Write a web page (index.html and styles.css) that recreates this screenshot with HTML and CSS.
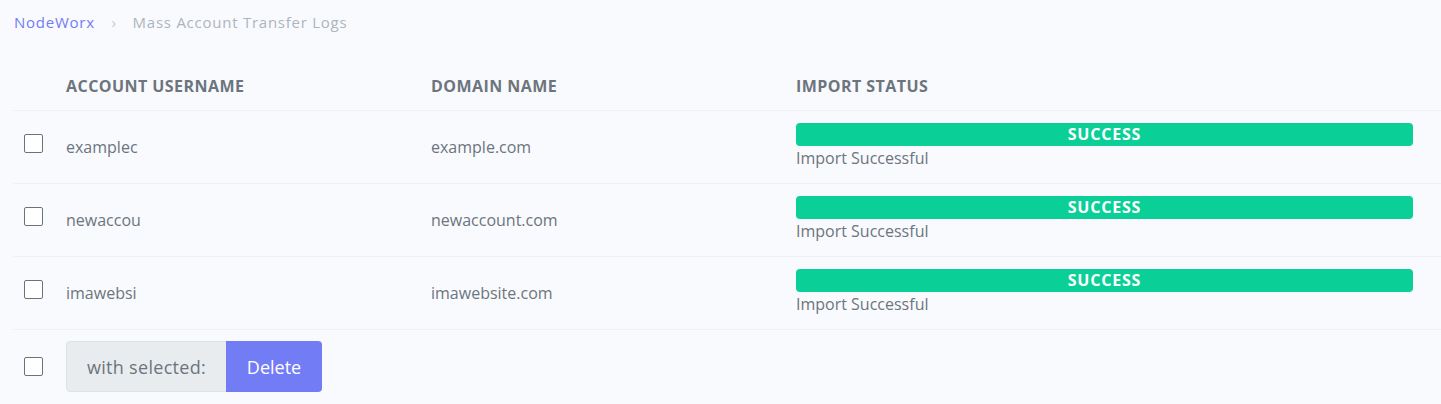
FILE: index.html
```html
<!DOCTYPE html>
<html lang="en">
<head>
<meta charset="utf-8">
<title>Mass Account Transfer Logs</title>
<link rel="stylesheet" href="styles.css">
</head>
<body>
<nav class="crumbs">
  <a class="crumb-link" href="#">NodeWorx</a>
  <span class="crumb-sep">›</span>
  <span class="crumb-current">Mass Account Transfer Logs</span>
</nav>
<table class="logs">
  <colgroup>
    <col class="c-check"><col class="c-user"><col class="c-domain"><col class="c-status">
  </colgroup>
  <thead>
    <tr>
      <th></th>
      <th>Account Username</th>
      <th>Domain Name</th>
      <th class="status-cell">Import Status</th>
    </tr>
  </thead>
  <tbody>
    <tr>
      <td class="check-cell"><span class="box"></span></td>
      <td>examplec</td>
      <td>example.com</td>
      <td class="status-cell"><div class="badge">SUCCESS</div><div class="msg">Import Successful</div></td>
    </tr>
    <tr>
      <td class="check-cell"><span class="box"></span></td>
      <td>newaccou</td>
      <td>newaccount.com</td>
      <td class="status-cell"><div class="badge">SUCCESS</div><div class="msg">Import Successful</div></td>
    </tr>
    <tr>
      <td class="check-cell"><span class="box"></span></td>
      <td>imawebsi</td>
      <td>imawebsite.com</td>
      <td class="status-cell"><div class="badge">SUCCESS</div><div class="msg">Import Successful</div></td>
    </tr>
  </tbody>
  <tfoot>
    <tr>
      <td class="check-cell"><span class="box"></span></td>
      <td colspan="3">
        <div class="group"><span class="group-label">with selected:</span><button class="btn-delete">Delete</button></div>
      </td>
    </tr>
  </tfoot>
</table>
</body>
</html>
```
FILE: styles.css
```css
html, body {
  margin: 0;
  padding: 0;
  background: #f9fafe;
  font-family: "Open Sans", "Lato", sans-serif;
  color: #6c757d;
}
.crumbs {
  padding: 12px 0 0 14px;
  height: 36px;
  box-sizing: border-box;
  font-size: 15px;
  letter-spacing: 0.75px;
  line-height: 20px;
}
.crumb-link { color: #727cf5; text-decoration: none; }
.crumb-sep { color: #c5c9d0; margin: 0 12px 0 12px; letter-spacing: 0; }
.crumb-current { color: #adb5bd; }
.logs {
  margin-left: 13px;
  width: 1428px;
  table-layout: fixed;
  border-collapse: collapse;
  margin-top: 24px;
}
.c-check { width: 53px; }
.c-user { width: 365px; }
.c-domain { width: 365px; }
.logs th {
  text-align: left;
  font-size: 16px;
  font-weight: 700;
  letter-spacing: 0.45px;
  text-transform: uppercase;
  color: #6c757d;
  padding: 17px 0 15px;
  line-height: 18px;
  border-bottom: 1px solid #eef0f5;
}
.logs td {
  font-size: 16px;
  line-height: 24px;
  padding: 12px 0 13px;
  border-bottom: 1px solid #eef0f5;
  vertical-align: middle;
}
.logs td.check-cell { padding-left: 11px; }
.logs .status-cell { padding-right: 28px; }
.box {
  display: block;
  width: 17px;
  height: 17px;
  border: 1.5px solid #6e7378;
  border-radius: 2px;
  background: #fff;
  margin-top: -6px;
}
.badge {
  background: #0acf97;
  color: #fff;
  border-radius: 4px;
  text-align: center;
  font-size: 16px;
  font-weight: 700;
  letter-spacing: 0.8px;
  height: 23px;
  line-height: 23px;
}
.msg { line-height: 24px; }
.logs tfoot td { border-bottom: none; padding: 11px 0; }
.logs tfoot .check-cell .box { margin-top: 0; }
.group {
  display: inline-flex;
  height: 51px;
  border-radius: 4px;
  overflow: hidden;
  font-size: 18px;
}
.group-label {
  background: #e9ecef;
  color: #6c757d;
  width: 160px;
  display: flex;
  align-items: center;
  justify-content: center;
  border: 1px solid #dee2e6;
  border-right: none;
  border-radius: 4px 0 0 4px;
  box-sizing: border-box;
  letter-spacing: 0.3px;
}
.btn-delete {
  width: 96px;
  background: #727cf5;
  color: #fff;
  border: none;
  font: inherit;
  font-size: 18px;
  padding: 0;
}
```
